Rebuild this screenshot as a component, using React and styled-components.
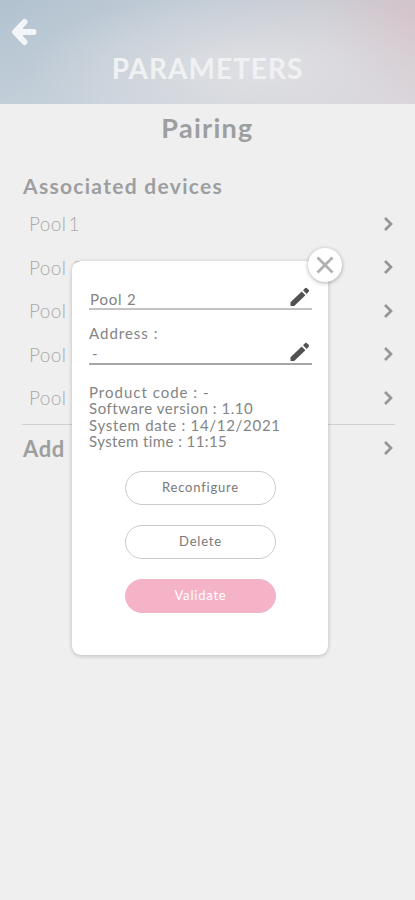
import React from "react";
import styled, { createGlobalStyle } from "styled-components";

const GlobalStyle = createGlobalStyle`
  * { box-sizing: border-box; }
  body { margin: 0; background: #efefef; }
  button { font: inherit; }
`;

const Screen = styled.div`
  position: relative;
  width: 415px;
  height: 900px;
  overflow: hidden;
  background: #efefef;
  font-family: Lato, "Open Sans", sans-serif;
  color: #9d9e9f;
`;

const Header = styled.header`
  height: 104px;
  padding: 17px 0 0 11px;
  background:
    radial-gradient(ellipse 230px 75px at 260px 68px, rgba(226, 226, 228, 0.85), rgba(222, 222, 226, 0.4) 55%, rgba(222, 222, 226, 0)),
    radial-gradient(ellipse 90px 80px at 415px 25px, rgba(214, 194, 200, 0.8), rgba(214, 196, 202, 0)),
    linear-gradient(180deg, rgba(174, 188, 202, 0.3), rgba(216, 220, 226, 0.4)),
    linear-gradient(90deg, #b2c4d1 0%, #bfccd7 25%, #cbd3db 48%, #d6d4d9 72%, #dccfd4 100%);
`;

const BackButton = styled.button`
  display: block;
  width: 26px;
  height: 30px;
  padding: 0;
  border: 0;
  background: none;
`;

const Title = styled.h1`
  margin: 3px 0 0 -11px;
  text-align: center;
  font-size: 28px;
  line-height: 36px;
  font-weight: 700;
  letter-spacing: 1px;
  color: #f0f1f2;
`;

const PageTitle = styled.h2`
  margin: 6px 0 0;
  text-align: center;
  font-size: 27px;
  line-height: 36px;
  font-weight: 700;
  letter-spacing: 1.3px;
`;

const Content = styled.main`
  padding: 24px 20px 0 22px;
`;

const SectionTitle = styled.h3`
  margin: 0;
  padding-left: 1px;
  font-size: 21px;
  line-height: 32px;
  font-weight: 700;
  letter-spacing: 1.3px;
`;

const Devices = styled.ul`
  margin: 0;
  padding: 0 0 4px;
  list-style: none;
  border-bottom: 1px solid #cfcfcf;
`;

const Device = styled.li`
  display: flex;
  align-items: center;
  justify-content: space-between;
  height: 43.5px;
  padding-left: 7px;
  font-size: 19px;
  font-weight: 300;
  letter-spacing: 0.4px;
  word-spacing: 1px;
  color: #a9aaab;

  &:first-child {
    word-spacing: -3.500px;
  }
`;

const AddRow = styled.div`
  display: flex;
  align-items: center;
  justify-content: space-between;
  height: 47px;
  padding-left: 1px;
  font-size: 22px;
  font-weight: 700;
  letter-spacing: 0.6px;
`;

const Dialog = styled.section`
  position: absolute;
  left: 72px;
  top: 261px;
  width: 256px;
  height: 394px;
  padding: 26px 16px 0 17px;
  border-radius: 9px;
  background: #fff;
  box-shadow: 0 1px 4px rgba(0, 0, 0, 0.22);
  color: #838485;
`;

const CloseButton = styled.button`
  position: absolute;
  right: -14px;
  top: -13px;
  display: grid;
  place-items: center;
  width: 34px;
  height: 34px;
  padding: 0;
  border: 0;
  border-radius: 50%;
  background: #fff;
  box-shadow: 0 1px 4px rgba(0, 0, 0, 0.32);
`;

const Field = styled.div`
  display: flex;
  align-items: flex-end;
  justify-content: space-between;
  height: 23px;
  padding: 0 2px 0 ${(p) => (p.$empty ? "3px" : "1px")};
  border-bottom: 2px solid ${(p) => (p.$empty ? "#a6a8a8" : "#c3c3c3")};
  font-size: 15px;
  line-height: ${(p) => (p.$empty ? "20px" : "17px")};
  letter-spacing: 0.8px;
`;

const FieldLabel = styled.div`
  margin-top: 14px;
  height: 18px;
  font-size: 15px;
  line-height: 19px;
  letter-spacing: 1px;
`;

const Info = styled.div`
  margin-top: 19px;
  font-size: 15px;
  line-height: 16.4px;
`;

const InfoLine = styled.div`
  letter-spacing: ${(p) => p.$spacing};
`;

const Actions = styled.div`
  display: grid;
  justify-content: center;
  gap: 20px;
  margin-top: 21px;
`;

const Action = styled.button`
  width: 151px;
  height: 34px;
  padding: 0 0 1px;
  border: 1px solid ${(p) => (p.$primary ? "#f5b3c8" : "#cbcbcb")};
  border-radius: 17px;
  background: ${(p) => (p.$primary ? "#f5b3c8" : "#fff")};
  color: ${(p) => (p.$primary ? "#fff" : "#777879")};
  font-size: 13px;
  letter-spacing: 0.8px;
`;

const BackIcon = () => (
  <svg width="26" height="30" viewBox="0 0 26 30" fill="none" stroke="#f2f5f9" strokeWidth="6" strokeLinecap="round" strokeLinejoin="round">
    <path d="M13.500 5 4 15l9.500 10M5 15h17.500" />
    <path d="M6 15l6-5v10z" fill="#f2f5f9" stroke="none" />
  </svg>
);

const Chevron = () => (
  <svg width="13" height="16" viewBox="0 0 13 16" fill="none" stroke="#959697" strokeWidth="2.700">
    <path d="m3 2 6 6-6 6" />
  </svg>
);

const Pencil = () => (
  <svg width="20" height="21" viewBox="0 0 20 21" fill="#515253">
    <path d="m.5 15.300 11.200-10.800 3.700 3.700L4.200 19H.5z" />
    <path d="m13 3.300 2.300-2.300q.7-.6 1.400 0l2.100 2.100q.6.600 0 1.300L16.700 7z" />
  </svg>
);

const CloseIcon = () => (
  <svg width="18" height="18" viewBox="0 0 18 18" stroke="#b0b0b0" strokeWidth="2.800">
    <path d="m1.500 1.500 15 15M16.500 1.500l-15 15" />
  </svg>
);

const devices = ["Pool 1", "Pool 2", "Pool 3", "Pool 4", "Pool 5"];

const info = [
  ["Product code : -", "1px"],
  ["Software version : 1.10", "0.55px"],
  ["System date : 14/12/2021", "0.7px"],
  ["System time : 11:15", "0.4px"],
];

export default function App() {
  return (
    <>
      <GlobalStyle />
      <Screen>
        <Header>
          <BackButton aria-label="Back"><BackIcon /></BackButton>
          <Title>PARAMETERS</Title>
        </Header>
        <PageTitle>Pairing</PageTitle>
        <Content>
          <SectionTitle>Associated devices</SectionTitle>
          <Devices>
            {devices.map((name) => (
              <Device key={name}>{name}<Chevron /></Device>
            ))}
          </Devices>
          <AddRow>Add<Chevron /></AddRow>
        </Content>
        <Dialog role="dialog">
          <CloseButton aria-label="Close"><CloseIcon /></CloseButton>
          <Field>Pool 2<Pencil /></Field>
          <FieldLabel>Address :</FieldLabel>
          <Field $empty>-<Pencil /></Field>
          <Info>
            {info.map(([text, spacing]) => (
              <InfoLine key={text} $spacing={spacing}>{text}</InfoLine>
            ))}
          </Info>
          <Actions>
            <Action>Reconfigure</Action>
            <Action>Delete</Action>
            <Action $primary>Validate</Action>
          </Actions>
        </Dialog>
      </Screen>
    </>
  );
}
